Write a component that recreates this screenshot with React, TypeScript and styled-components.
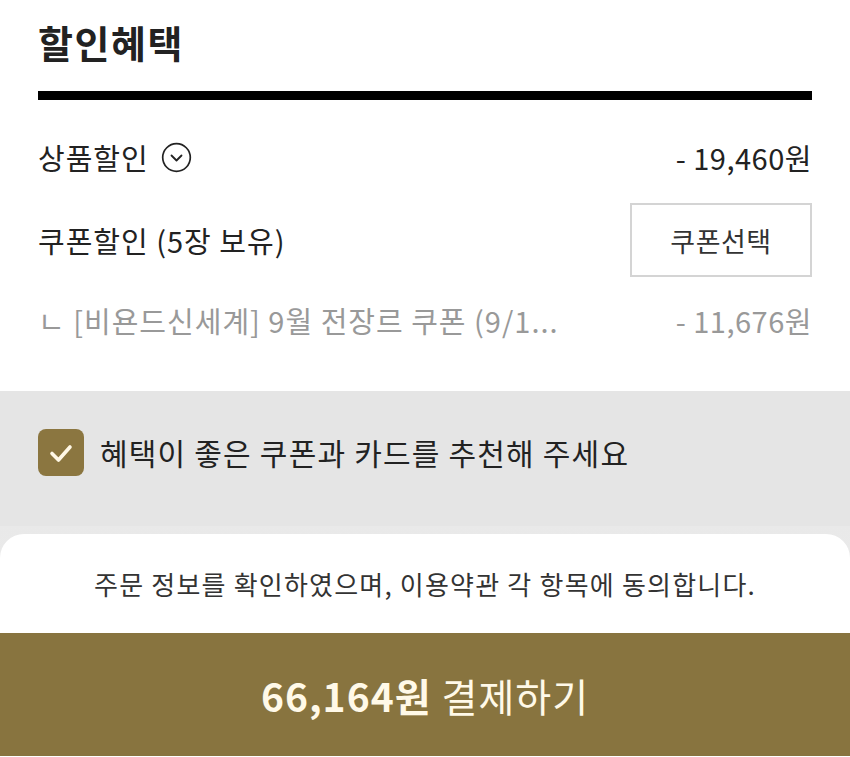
import styled, { createGlobalStyle } from "styled-components";

const GlobalStyle = createGlobalStyle`
  html, body {
    margin: 0;
    padding: 0;
    background: #ffffff;
  }
  body {
    font-family: "Noto Sans CJK KR", "Noto Sans", sans-serif;
    color: #222222;
  }
`;

const Page = styled.div`
  display: flex;
  flex-direction: column;
  width: 850px;
  min-height: 757px;
  background: #ffffff;
`;

const Section = styled.section`
  padding: 20px 38px 28px;
`;

const Title = styled.h2`
  margin: 0;
  font-size: 38px;
  font-weight: 700;
  line-height: 43px;
  letter-spacing: 1.5px;
  color: #222222;
`;

const Bar = styled.div`
  height: 9px;
  margin-top: 28px;
  background: #000000;
`;

const List = styled.div`
  display: flex;
  flex-direction: column;
  padding-top: 17px;
`;

const Row = styled.div<{ $height: number; $gap?: number }>`
  display: flex;
  align-items: center;
  justify-content: space-between;
  height: ${(p) => p.$height}px;
  margin-top: ${(p) => p.$gap ?? 0}px;
`;

const Label = styled.div<{ $muted?: boolean }>`
  display: flex;
  align-items: center;
  gap: 12px;
  font-size: 29px;
  letter-spacing: 1px;
  color: ${(p) => (p.$muted ? "#999999" : "#222222")};
`;

const Amount = styled.div<{ $muted?: boolean }>`
  font-size: 29px;
  letter-spacing: 0.5px;
  color: ${(p) => (p.$muted ? "#999999" : "#222222")};
`;

const CouponButton = styled.button`
  width: 182px;
  height: 74px;
  border: 2px solid #d4d4d4;
  background: #ffffff;
  font-family: inherit;
  font-size: 27px;
  letter-spacing: 0.5px;
  color: #333333;
  padding: 0;
`;

const Recommend = styled.div`
  display: flex;
  align-items: flex-start;
  gap: 16px;
  height: 135px;
  padding: 38px 38px 0;
  box-sizing: border-box;
  background: #e5e5e5;
`;

const CheckBox = styled.div`
  display: flex;
  align-items: center;
  justify-content: center;
  width: 46px;
  height: 47px;
  border-radius: 8px;
  background: #8b7640;
  flex-shrink: 0;
`;

const CheckText = styled.span`
  font-size: 30px;
  line-height: 47px;
  letter-spacing: 1.2px;
  color: #222222;
`;

const Footer = styled.div`
  padding-top: 8px;
  background: linear-gradient(#e9e9e9, #f1f1f1);
`;

const Sheet = styled.div`
  display: flex;
  flex-direction: column;
  background: #ffffff;
  border-radius: 24px 24px 0 0;
  overflow: hidden;
`;

const Agree = styled.p`
  margin: 0;
  height: 99px;
  display: flex;
  align-items: center;
  justify-content: center;
  font-size: 26px;
  letter-spacing: 1.2px;
  color: #333333;
`;

const PayButton = styled.button`
  height: 123px;
  border: none;
  background: #88743f;
  font-family: inherit;
  font-size: 39px;
  color: #fff9e8;
  letter-spacing: 1px;
  padding: 0;

  strong {
    font-weight: 700;
    margin-right: 10px;
  }
`;

const ChevronCircle = () => (
  <svg width="31" height="31" viewBox="0 0 31 31" fill="none">
    <circle cx="15.5" cy="15.5" r="13.8" stroke="#222" strokeWidth="1.7" />
    <polyline
      points="10.5,13.5 15.5,18.5 20.5,13.5"
      stroke="#222"
      strokeWidth="1.8"
      strokeLinecap="round"
      strokeLinejoin="round"
    />
  </svg>
);

const Check = () => (
  <svg width="28" height="28" viewBox="0 0 28 28" fill="none">
    <polyline
      points="5,14.5 11.5,21 23,8"
      stroke="#fff8e6"
      strokeWidth="3.6"
      strokeLinecap="round"
      strokeLinejoin="round"
    />
  </svg>
);

export default function App() {
  return (
    <>
      <GlobalStyle />
      <Page>
        <Section>
          <Title>할인혜택</Title>
          <Bar />
          <List>
            <Row $height={80}>
              <Label>
                상품할인
                <ChevronCircle />
              </Label>
              <Amount>- 19,460원</Amount>
            </Row>
            <Row $height={74} $gap={6}>
              <Label>쿠폰할인 (5장 보유)</Label>
              <CouponButton>쿠폰선택</CouponButton>
            </Row>
            <Row $height={86}>
              <Label $muted>ㄴ [비욘드신세계] 9월 전장르 쿠폰 (9/1...</Label>
              <Amount $muted>- 11,676원</Amount>
            </Row>
          </List>
        </Section>
        <Recommend>
          <CheckBox>
            <Check />
          </CheckBox>
          <CheckText>혜택이 좋은 쿠폰과 카드를 추천해 주세요</CheckText>
        </Recommend>
        <Footer>
          <Sheet>
            <Agree>주문 정보를 확인하였으며, 이용약관 각 항목에 동의합니다.</Agree>
            <PayButton>
              <strong>66,164원</strong>결제하기
            </PayButton>
          </Sheet>
        </Footer>
      </Page>
    </>
  );
}
